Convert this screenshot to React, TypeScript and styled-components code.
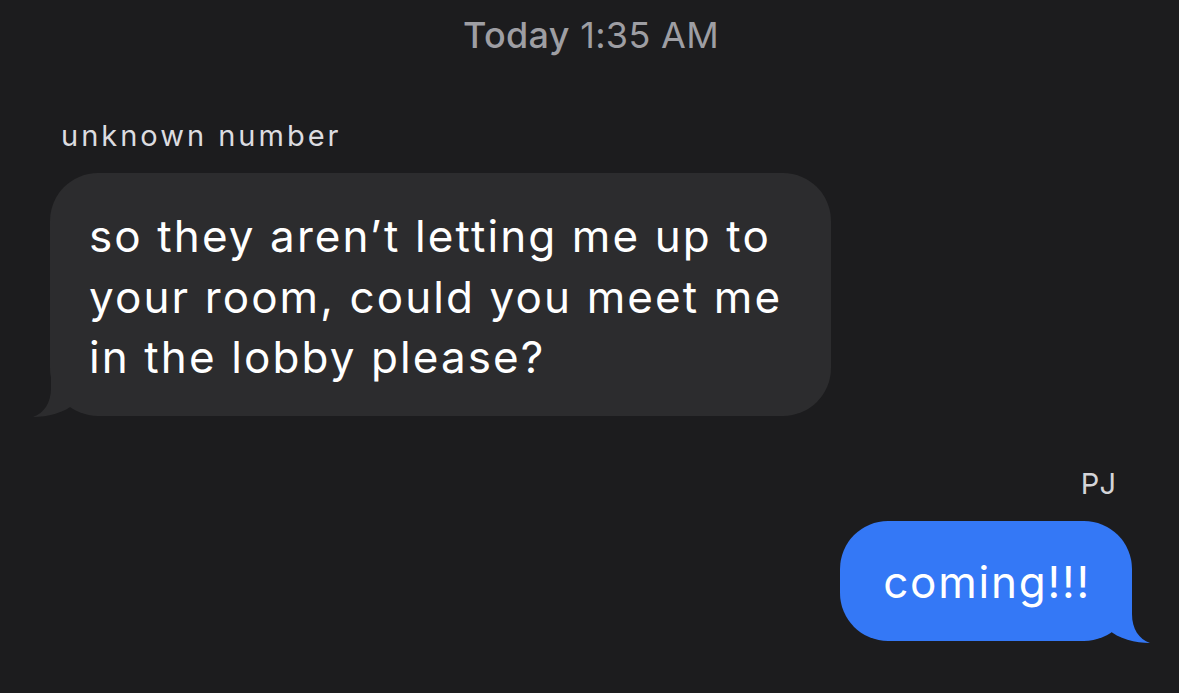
import React from "react";
import styled, { createGlobalStyle } from "styled-components";

const GlobalStyle = createGlobalStyle`
  html, body {
    margin: 0;
    padding: 0;
    background: #1c1c1e;
  }
  body {
    font-family: Inter, "Noto Sans", "Liberation Sans", sans-serif;
    -webkit-font-smoothing: antialiased;
  }
`;

const Screen = styled.div`
  width: 1179px;
  height: 693px;
  box-sizing: border-box;
  background: #1c1c1e;
  padding: 13px 47px 0 50px;
  display: flex;
  flex-direction: column;
  overflow: hidden;
`;

const Stamp = styled.div`
  text-align: center;
  font-size: 36px;
  line-height: 44px;
  color: #9e9ea3;
  letter-spacing: 0.3px;
`;

const StampDay = styled.span`
  font-weight: 500;
`;

const StampTime = styled.span`
  font-weight: 400;
`;

const Group = styled.div<{ $out?: boolean }>`
  display: flex;
  flex-direction: column;
  align-items: ${(p) => (p.$out ? "flex-end" : "flex-start")};
  margin-top: ${(p) => (p.$out ? "50px" : "61px")};
`;

const Sender = styled.div<{ $out?: boolean }>`
  font-size: 29px;
  line-height: 36px;
  color: ${(p) => (p.$out ? "#d4d4d8" : "#dcdce0")};
  margin: ${(p) => (p.$out ? "0 13px 0 0" : "0 0 0 11px")};
  letter-spacing: 3px;
`;

const Bubble = styled.div<{ $out?: boolean }>`
  position: relative;
  box-sizing: border-box;
  margin-top: 19px;
  max-width: 781px;
  width: fit-content;
  border-radius: 48px;
  background: ${(p) => (p.$out ? "#3478f6" : "#2c2c2e")};
  color: #ffffff;
  font-size: 44px;
  line-height: 60.5px;
  padding: ${(p) => (p.$out ? "31px 41px 29px 43px" : "33px 37px 28px 39px")};
  letter-spacing: ${(p) => (p.$out ? "1.8px" : "2.1px")};
`;

const Tail = styled.svg<{ $out?: boolean }>`
  position: absolute;
  width: 66px;
  height: 50px;
  bottom: ${(p) => (p.$out ? "-2px" : "-1px")};
  ${(p) => (p.$out ? "right: -18px;" : "left: -17px; transform: scaleX(-1);")}
  fill: ${(p) => (p.$out ? "#3478f6" : "#2c2c2e")};
`;

const BubbleTail = ({ out }: { out?: boolean }) => (
  <Tail $out={out} viewBox="0 0 66 50" aria-hidden="true">
    <path d="M48 0 L48 21 C48 36 55 46 66 50 C52 50 34 46 24 36 L24 0 Z" />
  </Tail>
);

export default function App() {
  return (
    <>
      <GlobalStyle />
      <Screen>
        <Stamp>
          <StampDay>Today</StampDay> <StampTime>1:35 AM</StampTime>
        </Stamp>

        <Group>
          <Sender>unknown number</Sender>
          <Bubble>
            so they aren’t letting me up to your room, could you meet me in the lobby please?
            <BubbleTail />
          </Bubble>
        </Group>

        <Group $out>
          <Sender $out>PJ</Sender>
          <Bubble $out>
            coming!!!
            <BubbleTail out />
          </Bubble>
        </Group>
      </Screen>
    </>
  );
}
